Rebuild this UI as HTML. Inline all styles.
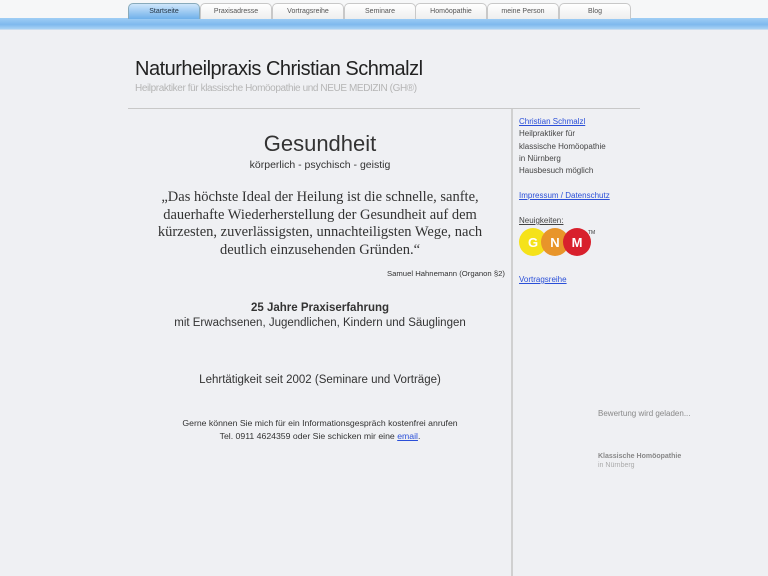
<!DOCTYPE html>
<html><head><meta charset="utf-8"><style>
*{margin:0;padding:0;box-sizing:border-box}
body{width:768px;height:576px;overflow:hidden;background:#eff0f3;font-family:"Liberation Sans",sans-serif;position:relative;color:#333}
.top{position:absolute;left:0;top:0;width:768px;height:19px;background:#f6f7f8}
.bar{position:absolute;left:0;top:18px;width:768px;height:12px;background:linear-gradient(#9fcdf5,#7fb9ee 60%,#a9d2f4);border-bottom:1px solid #c9ddf0}
.tab{position:absolute;top:3px;height:16px;width:72px;border:1px solid #c8c8c8;border-bottom:none;border-radius:5px 5px 0 0;background:linear-gradient(#fff,#eee);font-size:7px;color:#555;text-align:center;line-height:15px}
.tab.a{background:linear-gradient(#cfe6fb,#6fb0ea);color:#234;border-color:#8ab}
.abs{position:absolute}
a{color:#2a4fd8;text-decoration:underline}
.side{position:absolute;left:519px;font-size:8px;color:#444;line-height:12.3px}
</style></head><body>
<div class="top"></div><div class="bar"></div>
<div class="tab a" style="left:128px">Startseite</div>
<div class="tab" style="left:200px">Praxisadresse</div>
<div class="tab" style="left:272px">Vortragsreihe</div>
<div class="tab" style="left:344px">Seminare</div>
<div class="tab" style="left:415px">Homöopathie</div>
<div class="tab" style="left:487px">meine Person</div>
<div class="tab" style="left:559px">Blog</div>
<div class="abs" style="left:135px;top:58px;font-size:20px;color:#222;letter-spacing:-0.5px">Naturheilpraxis Christian Schmalzl</div>
<div class="abs" style="left:135px;top:83px;font-size:10px;color:#b5b5b5;letter-spacing:-0.4px">Heilpraktiker für klassische Homöopathie und NEUE MEDIZIN (GH®)</div>
<div class="abs" style="left:128px;top:108px;width:512px;height:1px;background:#c8c8c8"></div>
<div class="abs" style="left:511px;top:109px;width:2px;height:467px;background:#d0d0d0"></div>
<div class="abs" style="left:128px;width:384px;text-align:center;top:131px;font-size:22px;color:#333">Gesundheit</div>
<div class="abs" style="left:128px;width:384px;text-align:center;top:159px;font-size:10.5px">körperlich - psychisch - geistig</div>
<div class="abs" style="left:150px;width:340px;text-align:center;top:189px;font-family:'Liberation Serif',serif;font-size:14.5px;line-height:17.5px;color:#333">„Das höchste Ideal der Heilung ist die schnelle, sanfte, dauerhafte Wiederherstellung der Gesundheit auf dem kürzesten, zuverlässigsten, unnachteiligsten Wege, nach deutlich einzusehenden Gründen.“</div>
<div class="abs" style="left:387px;top:269px;font-size:7.7px">Samuel Hahnemann (Organon §2)</div>
<div class="abs" style="left:128px;width:384px;text-align:center;top:302px;font-size:11.5px;font-weight:bold">25 Jahre Praxiserfahrung</div>
<div class="abs" style="left:128px;width:384px;text-align:center;top:317px;font-size:11.5px">mit Erwachsenen, Jugendlichen, Kindern und Säuglingen</div>
<div class="abs" style="left:128px;width:384px;text-align:center;top:374px;font-size:11.5px">Lehrtätigkeit seit 2002 (Seminare und Vorträge)</div>
<div class="abs" style="left:128px;width:384px;text-align:center;top:417px;font-size:8.7px;line-height:13px">Gerne können Sie mich für ein Informationsgespräch kostenfrei anrufen<br>Tel. 0911 4624359 oder Sie schicken mir eine <a href="#">email</a>.</div>
<div class="side" style="top:116px"><a href="#">Christian Schmalzl</a><br>Heilpraktiker für<br>klassische Homöopathie<br>in Nürnberg<br>Hausbesuch möglich</div>
<div class="side" style="top:190px"><a href="#">Impressum / Datenschutz</a></div>
<div class="side" style="top:215px;text-decoration:underline">Neuigkeiten:</div>
<svg class="abs" style="left:519px;top:226px" width="78" height="32">
<circle cx="14" cy="16" r="14" fill="#f5e21a"/><circle cx="36" cy="16" r="14" fill="#e8952a"/><circle cx="58" cy="16" r="14" fill="#d8202c"/>
<text x="14" y="21" font-size="13" font-weight="bold" fill="#fff" text-anchor="middle" font-family="Liberation Sans">G</text>
<text x="36" y="21" font-size="13" font-weight="bold" fill="#fff" text-anchor="middle" font-family="Liberation Sans">N</text>
<text x="58" y="21" font-size="13" font-weight="bold" fill="#fff" text-anchor="middle" font-family="Liberation Sans">M</text>
<text x="69" y="8" font-size="5" fill="#333" font-family="Liberation Sans">TM</text></svg>
<div class="side" style="top:274px"><a href="#">Vortragsreihe</a></div>
<div class="abs" style="left:598px;top:409px;font-size:8px;color:#888">Bewertung wird geladen...</div>
<div class="abs" style="left:598px;top:453px;font-size:7px;color:#888;font-weight:bold">Klassische Homöopathie</div>
<div class="abs" style="left:598px;top:462px;font-size:7px;color:#aaa">in Nürnberg</div>
</body></html>
